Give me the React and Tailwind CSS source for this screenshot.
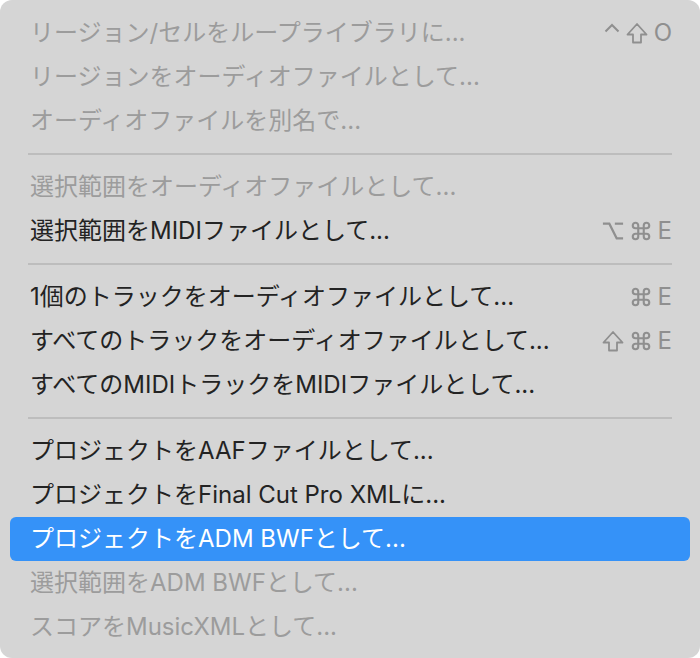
import React from "react";

const FONT = { fontFamily: "Inter, 'Noto Sans CJK JP', 'DejaVu Sans', sans-serif" };

const items = [
  { t: "リージョン/セルをループライブラリに...", d: true, k: ["ctrl", "shift", "O"] },
  { t: "リージョンをオーディオファイルとして...", d: true },
  { t: "オーディオファイルを別名で...", d: true },
  "sep",
  { t: "選択範囲をオーディオファイルとして...", d: true },
  { t: "選択範囲をMIDIファイルとして...", k: ["opt", "cmd", "E"] },
  "sep",
  { t: "1個のトラックをオーディオファイルとして...", k: ["cmd", "E"] },
  { t: "すべてのトラックをオーディオファイルとして...", k: ["shift", "cmd", "E"] },
  { t: "すべてのMIDIトラックをMIDIファイルとして..." },
  "sep",
  { t: "プロジェクトをAAFファイルとして..." },
  { t: "プロジェクトをFinal Cut Pro XMLに..." },
  { t: "プロジェクトをADM BWFとして...", s: true },
  { t: "選択範囲をADM BWFとして...", d: true },
  { t: "スコアをMusicXMLとして...", d: true },
];

function Glyph({ g }) {
  const common = {
    fill: "none",
    stroke: "currentColor",
    strokeLinecap: "round",
    strokeLinejoin: "round",
  };
  if (g === "cmd")
    return (
      <svg width="22" height="22" viewBox="0 0 24 24" {...common} strokeWidth="2.3">
        <path d="M15 6v12a3 3 0 1 0 3-3H6a3 3 0 1 0 3 3V6a3 3 0 1 0-3 3h12a3 3 0 1 0-3-3" />
      </svg>
    );
  if (g === "opt")
    return (
      <svg width="22" height="22" viewBox="0 0 24 24" {...common} strokeWidth="2.4" strokeLinecap="butt" strokeLinejoin="miter">
        <path d="M1 4h7l8 16h7" />
        <path d="M14 4h9" />
      </svg>
    );
  if (g === "shift")
    return (
      <svg width="22" height="22" viewBox="0 0 22 22" {...common} strokeWidth="1.8">
        <path d="M7 20.5v-8H1.5L11 2l9.5 10.5H15v8H7z" />
      </svg>
    );
  if (g === "ctrl")
    return (
      <svg width="16" height="22" viewBox="0 0 16 22" {...common} strokeWidth="2" strokeLinecap="butt" strokeLinejoin="miter">
        <path d="M1.5 9.5l6.5-6.5 6.5 6.5" />
      </svg>
    );
  return (
    <span className="text-[24px] leading-none" style={{ fontFamily: "Inter, sans-serif" }}>
      {g}
    </span>
  );
}

export default function App() {
  return (
    <div className="w-[700px] h-[658px] bg-white">
      <div className="w-full h-full bg-[#d5d5d5] rounded-[12px] pt-[11px] pb-[9px] px-[10px] flex flex-col" style={FONT}>
        {items.map((it, i) =>
          it === "sep" ? (
            <div key={i} className="h-[22px] flex items-center px-[18px]">
              <div className="w-full h-[2px] bg-[#bdbdbd]" />
            </div>
          ) : (
            <div
              key={i}
              className={
                "h-[44px] flex items-center justify-between pl-[20px] pr-[18px] rounded-[6px] " +
                (it.s ? "bg-[#3592f8] text-white" : it.d ? "text-[#9c9c9c]" : "text-[#232323]")
              }
            >
              <span className="text-[24px] leading-none whitespace-nowrap">{it.t}</span>
              {it.k && (
                <span className="flex items-center gap-[6px] text-[#8f8f8f]">
                  {it.k.map((g, j) => (
                    <Glyph key={j} g={g} />
                  ))}
                </span>
              )}
            </div>
          )
        )}
      </div>
    </div>
  );
}
